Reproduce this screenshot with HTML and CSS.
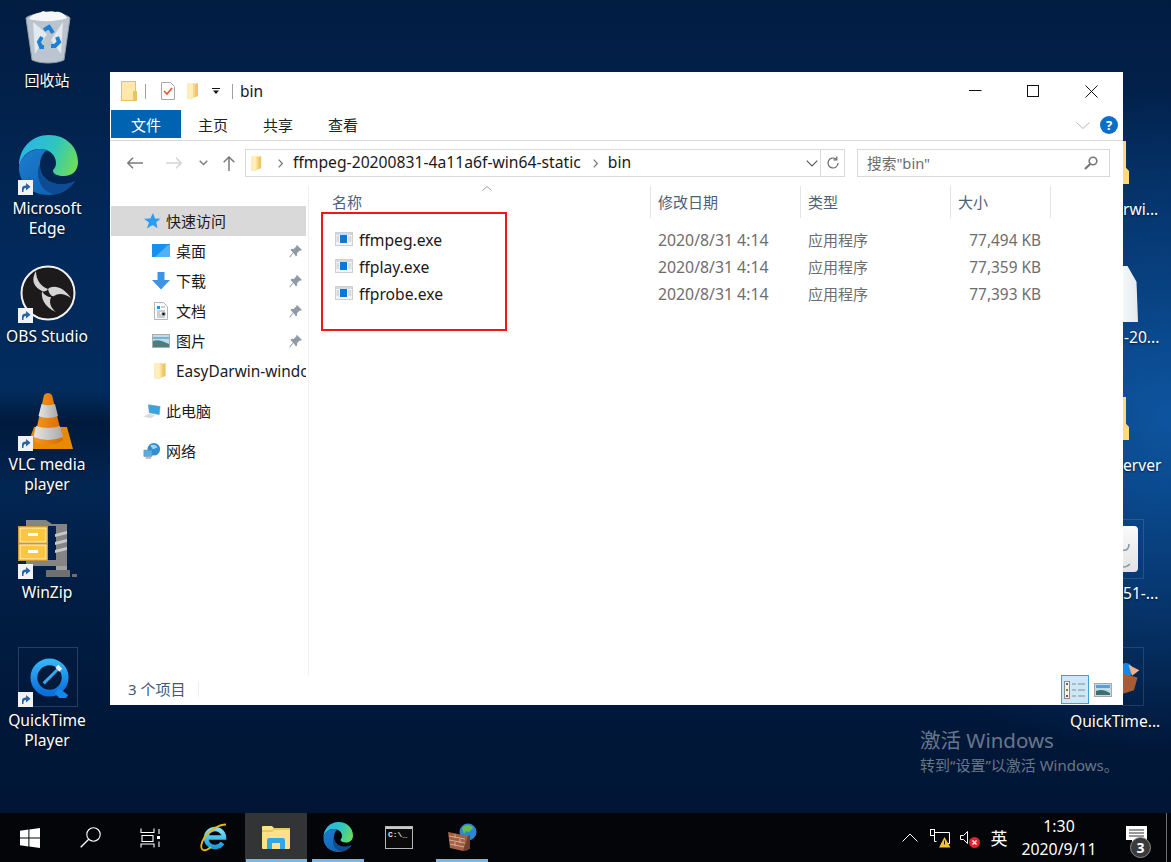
FILE: index.html
```html
<!DOCTYPE html>
<html lang="zh-CN">
<head>
<meta charset="utf-8">
<title>bin</title>
<link rel="stylesheet" href="styles.css">
</head>
<body>
<svg class="defs" width="0" height="0" aria-hidden="true">
  <defs>
    <linearGradient id="edgeTop" x1="0" y1="0.3" x2="1" y2="0.6"><stop offset="0" stop-color="#2bb4e8"/><stop offset=".55" stop-color="#2fc6c0"/><stop offset="1" stop-color="#6cdb5c"/></linearGradient>
    <linearGradient id="edgeLow" x1="0" y1="0" x2="1" y2="1"><stop offset="0" stop-color="#1b7fd0"/><stop offset="1" stop-color="#0f5aa8"/></linearGradient>
    <linearGradient id="qtBlue" x1="0" y1="0" x2="0" y2="1"><stop offset="0" stop-color="#35b2f5"/><stop offset="1" stop-color="#0a6fdc"/></linearGradient>
    <linearGradient id="coneFill" x1="0" y1="0" x2="1" y2="0"><stop offset="0" stop-color="#f59a1c"/><stop offset="1" stop-color="#d96a00"/></linearGradient>
    <linearGradient id="coneWhite" x1="0" y1="0" x2="1" y2="0"><stop offset="0" stop-color="#e6e6e6"/><stop offset="1" stop-color="#a9a9a9"/></linearGradient>
    <linearGradient id="ieBlue" x1="0" y1="0" x2="0" y2="1"><stop offset="0" stop-color="#7fe3fb"/><stop offset="1" stop-color="#1a9be0"/></linearGradient>
    <symbol id="shortcut" viewBox="0 0 15 15"><rect width="15" height="15" fill="#f2f2f2"/><path d="M4 12V8.500C4 6.500 5.500 5.500 8 5.500V3l4.500 3.800L8 10.500V8C6.500 8 5.500 8.500 5.500 12Z" fill="#2a62a8"/></symbol>
    <symbol id="tinyfolder" viewBox="0 0 13 18"><path d="M0 1h7l1 1 3-1v13l-7 3-4-.5Z" fill="#f8d97f"/><path d="M0 1h6v15l-2 1-4-.5Z" fill="#fdeebb"/><path d="M8 2l3-1v13l-3 1Z" fill="#efc768"/></symbol>
    <symbol id="pin" viewBox="0 0 13 13"><path d="M8 0l5 5-1.500.8-.8-.3-2.700 2.700.2 2-1.200 1.200L4.500 8 1 12.500l-.8-.6L4 7.500 1.500 5l1.200-1.200 2 .2L7.500 1.300 7.200.6Z" fill="#8e9aa6"/></symbol>
    <symbol id="exe" viewBox="0 0 18 14"><rect x=".5" y=".5" width="17" height="13" fill="#f4f4f4" stroke="#cfcfcf"/><rect x="1" y="1" width="16" height="2" fill="#d5d9de"/><rect x="5" y="3" width="7" height="8" fill="#0a78d7"/><rect x="1.500" y="4" width="2.500" height="6" fill="#d6dade"/><path d="M13 5h3.500M13 7h3.500M13 9h3.500" stroke="#c2c7cc"/></symbol>
    <symbol id="edge" viewBox="0 0 60 60">
      <path d="M1 31C1 13 14 0 31 0c17 0 29 12 29 27 0 9-6 14-14 14-6 0-11-2-11-5 0-2 3-3 3-8 0-8-7-14-16-14C12 14 4 20 1 31Z" fill="url(#edgeTop)"/>
      <path d="M1 31c-1 16 12 29 29 29 12 0 21-5 27-14-6 3-12 4-18 3-11-2-18-10-17-20 .5-7 3-11 7-14-1 0-2-1-7-1C12 14 3 22 1 31Z" fill="url(#edgeLow)"/>
      <path d="M22 29c-1 10 6 18 17 20 6 1 12 0 18-3-5 8-13 12-21 13-6-1-13-6-15-14-2-6-1-12 1-16Z" fill="#0d4c94"/>
    </symbol>
  </defs>
</svg>

<main class="desktop">
  <div class="desk-item item-recycle">
    <svg class="icon-recycle" viewBox="0 0 46 54">
      <path d="M1 8c6-6 38-7 44 0l-6 42c-8 4-24 4-32 0Z" fill="#cfd7de" fill-opacity=".9" stroke="#8f9aa4"/>
      <path d="M4 9C8 2 14 4 18 1c4 2 8-1 12 1 5-1 10 2 12 6-10 4-28 4-38 1Z" fill="#f4f6f8"/>
      <path d="M8 12l14 12-12 20ZM38 12L26 30l10 14Z" fill="#eef1f4" fill-opacity=".8"/>
      <g fill="none" stroke="#1d7fd6" stroke-width="4">
        <path d="M19 20l5-3 4 6"/><path d="M32 27l2 5-4 4h-4"/><path d="M19 37h-3l-2-5 3-5"/>
      </g>
    </svg>
    <span class="desk-label label-cjk">回收站</span>
  </div>

  <div class="desk-item item-edge">
    <svg class="icon-60"><use href="#edge"/></svg>
    <svg class="shortcut"><use href="#shortcut"/></svg>
    <span class="desk-label">Microsoft<br>Edge</span>
  </div>

  <div class="desk-item item-obs">
    <svg class="icon-obs" viewBox="0 0 56 56">
      <circle cx="28" cy="28" r="26.500" fill="#1d1a1b" stroke="#f2f2f2" stroke-width="2"/>
      <g fill="#d4d4d4">
        <path d="M16 6C11 14 13 22 22 26c2 1 5 0 6-2C22 22 16 16 16 6Z"/>
        <path d="M28 24c5-5 16-2 23 9-7-5-13-5-17-2-2 1-5-2-6-7Z"/>
        <path d="M22 26c-1 7 2 16 14 21-6-5-7-10-5-15-3 0-7-2-9-6Z"/>
      </g>
    </svg>
    <svg class="shortcut"><use href="#shortcut"/></svg>
    <span class="desk-label">OBS Studio</span>
  </div>

  <div class="desk-item item-vlc">
    <svg class="icon-vlc" viewBox="0 0 48 58">
      <path d="M9 35L1 57h47l-6-22Z" fill="#e88a00"/>
      <path d="M19 3q4-4 8 0l11 45c-5 6-25 6-29 0Z" fill="url(#coneFill)"/>
      <path d="M16.500 12q6.500 2.500 13.500 0l3 12q-10 4-19.500 0Z" fill="url(#coneWhite)"/>
      <path d="M11 34q12 4 24 0l3 11q-15 6-29.500 0Z" fill="url(#coneWhite)"/>
    </svg>
    <svg class="shortcut"><use href="#shortcut"/></svg>
    <span class="desk-label">VLC media<br>player</span>
  </div>

  <div class="desk-item item-winzip">
    <svg class="icon-60 icon-zip" viewBox="0 0 60 58">
      <path d="M8 0h20l6 4h15v42H40v4h-2V6H8Z" fill="#848484"/>
      <path d="M8 40h41v6H8Z" fill="#848484"/>
      <path d="M38 46h11v6h-11Z" fill="#a0a0a0"/>
      <path d="M28 50h24v7H28ZM54 54h5v3h-5Z" fill="#6f6f6f"/>
      <path d="M37 14l12-3v3l-12 3ZM37 22l12-3v3l-12 3ZM37 30l12-3v3l-12 3Z" fill="#c8c8c8"/>
      <rect x="0" y="6" width="30" height="35" fill="#c99a2e"/>
      <rect x="2" y="8" width="26" height="14" fill="#fdc63f" stroke="#fff3c8"/>
      <rect x="2" y="25" width="26" height="14" fill="#fdc63f" stroke="#fff3c8"/>
      <rect x="10" y="13" width="10" height="3" fill="#fff"/><rect x="10" y="30" width="10" height="3" fill="#fff"/>
    </svg>
    <svg class="shortcut"><use href="#shortcut"/></svg>
    <span class="desk-label">WinZip</span>
  </div>

  <div class="desk-item item-qt">
    <div class="qt-frame">
      <svg class="icon-qt" viewBox="0 0 42 42">
        <circle cx="20" cy="20" r="16" fill="#041a3a" stroke="url(#qtBlue)" stroke-width="7"/>
        <path d="M30 31l9 7-2 3H30l-5-5Z" fill="#1488e8"/>
        <path d="M14 26l14-14" stroke="#3fa6ee" stroke-width="3"/>
        <path d="M26 10l3-3 4 4-3 3Z" fill="#e8f4ff"/>
      </svg>
    </div>
    <svg class="shortcut"><use href="#shortcut"/></svg>
    <span class="desk-label">QuickTime<br>Player</span>
  </div>

  <div class="peek peek-folder-a"></div>
  <div class="peek peek-file"></div>
  <div class="peek peek-folder-b"></div>
  <div class="peek peek-frame-a">
    <svg class="peek-sheet" viewBox="0 0 15 46"><path d="M0 24c4 1 6-2 6-6M0 41c3 0 5-1 7-3" fill="none" stroke="#8b99a8" stroke-width="1.600"/></svg>
  </div>
  <div class="peek peek-frame-b">
    <svg class="peek-box" viewBox="0 0 22 36"><circle cx="3" cy="10" r="8" fill="#1488e8"/><path d="M0 14l16 4-4 14-12 4Z" fill="#a95c34"/><path d="M6 4l12 6-8 6Z" fill="#f2b08a"/></svg>
  </div>
  <span class="peek-label label-a">rwi...</span>
  <span class="peek-label label-b">-20...</span>
  <span class="peek-label label-c">erver</span>
  <span class="peek-label label-d">51-...</span>
  <span class="peek-label label-e">QuickTime...</span>

  <div class="activate">
    <div class="activate-title">激活 Windows</div>
    <div class="activate-note">转到“设置”以激活 Windows。</div>
  </div>

  <section class="window">
    <header class="titlebar">
      <svg class="qat-folder" viewBox="0 0 16 20"><rect x=".5" y=".5" width="14" height="19" fill="#fdeaa8" stroke="#e6c25c"/><rect x="12" y="10" width="4" height="10" fill="#e8c566"/></svg>
      <i class="qat-sep"></i>
      <svg class="qat-doc" viewBox="0 0 14 18"><path d="M.5.500h9l4 4v13H.5Z" fill="#fff" stroke="#a8a8a8"/><path d="M3 9l3 3 5-6" fill="none" stroke="#e8562a" stroke-width="1.600"/></svg>
      <svg class="qat-fold"><use href="#tinyfolder"/></svg>
      <svg class="qat-drop" viewBox="0 0 8 6"><rect width="8" height="1" fill="#111"/><path d="M1 2.500h6L4 6Z" fill="#111"/></svg>
      <i class="qat-sep qat-sep-b"></i>
      <span class="win-title">bin</span>
      <div class="win-buttons">
        <svg class="win-btn win-min" viewBox="0 0 13 13"><path d="M0 5.500h12.500" stroke="#111"/></svg>
        <svg class="win-btn" viewBox="0 0 13 13"><rect x=".5" y=".5" width="11" height="11" fill="none" stroke="#111"/></svg>
        <svg class="win-btn" viewBox="0 0 13 13"><path d="M.5.500l12 12M12.500.500l-12 12" stroke="#111"/></svg>
      </div>
    </header>

    <nav class="tabs">
      <span class="tab tab-file">文件</span>
      <span class="tab tab-a">主页</span>
      <span class="tab tab-b">共享</span>
      <span class="tab tab-c">查看</span>
      <svg class="ribbon-caret" viewBox="0 0 14 7"><path d="M.5.500L7 6.500 13.500.500" fill="none" stroke="#b5b5b5"/></svg>
      <span class="help">?</span>
    </nav>

    <div class="navbar">
      <span class="nav-slot slot-back"><svg width="16" height="12" viewBox="0 0 16 12"><path d="M16 6H1M6 .700L.800 6 6 11.300" fill="none" stroke="#7a7a7a" stroke-width="1.500"/></svg></span>
      <span class="nav-slot slot-fwd"><svg width="16" height="12" viewBox="0 0 16 12"><path d="M0 6h15M10 .700L15.200 6 10 11.300" fill="none" stroke="#d4d4d4" stroke-width="1.500"/></svg></span>
      <span class="nav-slot slot-down"><svg width="9" height="6" viewBox="0 0 9 6"><path d="M.7.700l3.800 3.800L8.300.7" fill="none" stroke="#808080" stroke-width="1.500"/></svg></span>
      <span class="nav-slot slot-up"><svg width="12" height="15" viewBox="0 0 12 15"><path d="M6 15V1M.7 6.300L6 1l5.300 5.300" fill="none" stroke="#7a7a7a" stroke-width="1.500"/></svg></span>
      <div class="address">
        <svg class="addr-folder"><use href="#tinyfolder"/></svg>
        <svg class="crumb-sep" viewBox="0 0 5 9"><path d="M.7.700l3.600 3.800L.7 8.300" fill="none" stroke="#777" stroke-width="1.200"/></svg>
        <span class="crumb">ffmpeg-20200831-4a11a6f-win64-static</span>
        <svg class="crumb-sep" viewBox="0 0 5 9"><path d="M.7.700l3.600 3.800L.7 8.300" fill="none" stroke="#777" stroke-width="1.200"/></svg>
        <span class="crumb">bin</span>
        <svg class="addr-drop" viewBox="0 0 12 7"><path d="M.7.700L6 6l5.300-5.300" fill="none" stroke="#555" stroke-width="1.100"/></svg>
        <span class="addr-refresh"><svg width="14" height="14" viewBox="0 0 14 14"><path d="M12 7a5 5 0 1 1-2-4" fill="none" stroke="#666" stroke-width="1.200"/><path d="M10.800.500v3.300H7.500" fill="none" stroke="#666" stroke-width="1.200"/></svg></span>
      </div>
      <div class="searchbox">
        <span class="search-hint">搜索"bin"</span>
        <svg class="search-glass" viewBox="0 0 14 14"><circle cx="9" cy="5" r="3.800" fill="none" stroke="#777" stroke-width="1.600"/><path d="M6.200 8L1 13" stroke="#777" stroke-width="2.200"/></svg>
      </div>
    </div>

    <div class="body">
      <aside class="sidebar">
        <div class="side-row side-top selected">
          <svg class="side-icon" viewBox="0 0 18 18"><path d="M10 1l2 5.500 5.500.3-4.300 3.500 1.400 6L9.500 13 4 16.500l2-6L1 6.800l6.300-.3Z" fill="#2b9cf2"/></svg>
          <span>快速访问</span>
        </div>
        <div class="side-row side-sub">
          <svg class="side-icon" viewBox="0 0 18 14"><rect width="18" height="13" fill="#1592f0"/><path d="M3 13L16 1h2v12Z" fill="#4fb2f6"/></svg>
          <span>桌面</span><svg class="pin"><use href="#pin"/></svg>
        </div>
        <div class="side-row side-sub">
          <svg class="side-icon" viewBox="0 0 18 18"><path d="M5.500 0h7v8H18l-9 9.500L0 8h5.500Z" fill="#3f93e2"/></svg>
          <span>下载</span><svg class="pin"><use href="#pin"/></svg>
        </div>
        <div class="side-row side-sub">
          <svg class="side-icon" viewBox="0 0 14 18"><path d="M.5.500h9l4 4v13H.5Z" fill="#fbfbfb" stroke="#b5b5b5"/><path d="M3 4h3v3H3Z" fill="#2b8fe0"/><path d="M7 5h4M3 9h8M3 11h3M8 10.500h3v3H8ZM3 13h4M3 15h8" stroke="#93a3b0"/></svg>
          <span>文档</span><svg class="pin"><use href="#pin"/></svg>
        </div>
        <div class="side-row side-sub">
          <svg class="side-icon" viewBox="0 0 18 14"><rect x=".5" y=".5" width="17" height="13" fill="#bcdcee" stroke="#adadad"/><path d="M1 7c5-2 9 0 16 3v3H1Z" fill="#4d7f7a"/><path d="M1 3h16v2H1Z" fill="#79b2d8"/></svg>
          <span>图片</span><svg class="pin"><use href="#pin"/></svg>
        </div>
        <div class="side-row side-sub">
          <svg class="side-icon side-folder"><use href="#tinyfolder"/></svg>
          <span class="side-latin">EasyDarwin-windows</span>
        </div>
        <div class="side-row side-top side-gap">
          <svg class="side-icon" viewBox="0 0 20 16"><path d="M6 1l13 2-1 9-11-2Z" fill="#36a5e6" stroke="#7a8a96" stroke-width=".6"/><path d="M0 14l7-3 7 2-6 3Z" fill="#d9dcdf"/></svg>
          <span>此电脑</span>
        </div>
        <div class="side-row side-top side-gap">
          <svg class="side-icon" viewBox="0 0 20 18"><circle cx="12" cy="7" r="7" fill="#2f8fd3"/><path d="M8 3c3-2 7-1 8 2l-5 2Z" fill="#9ed2ef"/><rect x="1" y="8" width="9" height="7" fill="#54b0e4" stroke="#6e7f8c" stroke-width=".6"/><path d="M3 16h6v1.500H3Z" fill="#9aa3ab"/></svg>
          <span>网络</span>
        </div>
      </aside>

      <div class="files">
        <svg class="sort-caret" viewBox="0 0 10 5"><path d="M.5 4.500L5 .500l4.500 4" fill="none" stroke="#9a9a9a"/></svg>
        <div class="file-grid file-head">
          <span class="col-name">名称</span>
          <span class="col-cell">修改日期</span>
          <span class="col-cell">类型</span>
          <span class="col-cell col-last">大小</span>
        </div>
        <div class="file-grid file-row">
          <span class="file-name"><svg class="exe"><use href="#exe"/></svg>ffmpeg.exe</span>
          <span class="file-meta file-date">2020/8/31 4:14</span>
          <span class="file-meta">应用程序</span>
          <span class="file-meta file-size">77,494 KB</span>
        </div>
        <div class="file-grid file-row">
          <span class="file-name"><svg class="exe"><use href="#exe"/></svg>ffplay.exe</span>
          <span class="file-meta file-date">2020/8/31 4:14</span>
          <span class="file-meta">应用程序</span>
          <span class="file-meta file-size">77,359 KB</span>
        </div>
        <div class="file-grid file-row">
          <span class="file-name"><svg class="exe"><use href="#exe"/></svg>ffprobe.exe</span>
          <span class="file-meta file-date">2020/8/31 4:14</span>
          <span class="file-meta">应用程序</span>
          <span class="file-meta file-size">77,393 KB</span>
        </div>
        <div class="callout"></div>
      </div>
    </div>

    <footer class="status">
      <span class="status-count">3 个项目</span>
      <span class="view-btn view-on"><svg width="22" height="18" viewBox="0 0 22 18"><g fill="#f2f2f2" stroke="#8c8c8c"><rect x=".5" y=".5" width="5" height="17"/></g><rect x="2" y="2" width="2" height="2" fill="#666"/><rect x="2" y="8" width="2" height="2" fill="#8a7a2a"/><rect x="2" y="14" width="2" height="2" fill="#b0392a"/><path d="M8 3h4M14 3h7M8 9h4M14 9h7M8 15h4M14 15h7" stroke="#8a8a8a"/></svg></span>
      <span class="view-btn view-large"><svg width="18" height="14" viewBox="0 0 18 14"><rect x=".5" y=".5" width="17" height="13" fill="#bcdcee" stroke="#a8a8a8"/><path d="M2 2h14v3H2Z" fill="#5f9ed0"/><path d="M2 8c5-2 9-1 14 2v2H2Z" fill="#3f6f6c"/></svg></span>
    </footer>
  </section>
</main>

<footer class="taskbar">
  <span class="sys-btn"><svg width="20" height="20" viewBox="0 0 20 20"><path d="M0 2.800l8.400-1.200V9.500H0ZM9.400 1.400L20 0v9.500H9.400ZM0 10.500h8.400v7.900L0 17.200ZM9.400 10.500H20V20L9.400 18.600Z" fill="#fff"/></svg></span>
  <span class="sys-btn"><svg width="21" height="21" viewBox="0 0 21 21"><circle cx="13.500" cy="7.500" r="6.700" fill="none" stroke="#fff" stroke-width="1.100"/><path d="M8.700 12.300L.7 20.300" stroke="#fff" stroke-width="1.300"/></svg></span>
  <span class="sys-btn"><svg width="21" height="20" viewBox="0 0 21 20"><path d="M1 .500v4h13v-4M2 7.500h11v6H2ZM1 19.500v-3.500h13v3.500M19 1v5M19 13.500V19" fill="none" stroke="#fff" stroke-width="1.100"/><rect x="17" y="8" width="3" height="3" fill="#fff"/></svg></span>
  <span class="sys-gap"></span>
  <span class="task">
    <svg width="29" height="29" viewBox="0 0 29 29"><path d="M7 14.500h17a9 9 0 1 0-1.500 5.500" fill="none" stroke="url(#ieBlue)" stroke-width="4.500"/><path d="M26 1.500c-6 0-16 5-21 12-4 6-5 12-2 13.500 2 .8 5-.5 8-3" fill="none" stroke="#e8b60c" stroke-width="1.800"/></svg>
  </span>
  <span class="task task-active task-on">
    <svg width="28" height="23" viewBox="0 0 28 23"><path d="M1 0h9l2 2h15a1 1 0 0 1 1 1v19a1 1 0 0 1-1 1H1a1 1 0 0 1-1-1V1a1 1 0 0 1 1-1Z" fill="#fce28a"/><path d="M0 4h10l2-2h16v2H12l-2 2H0Z" fill="#e8c867"/><path d="M5 23v-9a2 2 0 0 1 2-2h14a2 2 0 0 1 2 2v9h-5v-6h-8v6Z" fill="#33a6e4"/></svg>
  </span>
  <span class="task task-on"><svg width="30" height="30"><use href="#edge"/></svg></span>
  <span class="task task-cmd">
    <svg width="28" height="23" viewBox="0 0 28 23"><rect x=".5" y=".5" width="27" height="22" fill="#0a0a0a" stroke="#b5b5b5"/><rect x="1" y="1" width="26" height="2" fill="#c9c9c9"/><text x="3" y="11" class="cmd-text">C:\_</text></svg>
  </span>
  <span class="task task-on">
    <svg width="29" height="28" viewBox="0 0 29 28"><circle cx="20" cy="9" r="8.500" fill="#2f84d6"/><path d="M14 5c3-4 9-4 11 0l-4 4-3-1-2 3Z" fill="#64c04a"/><path d="M0 9l20 4v14l-5 1L2 25Z" fill="#a55f45"/><path d="M1 13l16 3M1 17l16 3M2 21l14 3M7 11v4M12 16v4M7 19v4" stroke="#d9bfa9" stroke-width=".8"/><path d="M20 13l2-1v14l-7 2Z" fill="#6d3f2e"/></svg>
  </span>

  <div class="tray">
    <span class="tray-slot slot-chev"><svg width="16" height="9" viewBox="0 0 16 9"><path d="M.5 8.500L8 1l7.500 7.500" fill="none" stroke="#fff"/></svg></span>
    <span class="tray-slot slot-net"><svg width="21" height="19" viewBox="0 0 21 19"><path d="M4.500 3.500h15v11h-8M4.500 3.500v9h2" fill="none" stroke="#fff"/><rect x=".5" y=".5" width="4" height="6" fill="#000" stroke="#fff"/><path d="M14.500 8l6 10.500H9Z" fill="#fbc02d"/><path d="M14.500 11.500v4" stroke="#222"/></svg></span>
    <span class="tray-slot slot-snd"><svg width="20" height="18" viewBox="0 0 20 18"><path d="M.5 5.500h3l4-4v12l-4-4h-3Z" fill="none" stroke="#fff"/><circle cx="14.500" cy="12.500" r="5.500" fill="#e0242f"/><path d="M12.500 10.500l4 4M16.500 10.500l-4 4" stroke="#fff" stroke-width="1.300"/></svg></span>
    <span class="tray-slot slot-ime">英</span>
    <span class="clock"><span>1:30</span><span>2020/9/11</span></span>
    <span class="tray-slot slot-note">
      <svg width="21" height="17" viewBox="0 0 21 17"><path d="M0 0h21v14H9l-3 3v-3H0Z" fill="#fff"/><path d="M3 4h15M3 7h15M3 10h15" stroke="#333"/></svg>
      <span class="note-badge">3</span>
    </span>
    <i class="tray-edge"></i>
  </div>
</footer>
</body>
</html>
```

FILE: styles.css
```css
* { box-sizing: border-box; }
html, body { margin: 0; padding: 0; }
body {
  width: 1171px;
  height: 862px;
  overflow: hidden;
  background: #000;
  font-family: "Noto Sans", "Noto Sans CJK SC", sans-serif;
  font-size: 15px;
  color: #1a1a1a;
}
svg { display: block; flex: none; }
.defs { position: absolute; }

.desktop {
  position: relative;
  height: 813px;
  overflow: hidden;
  background:
    radial-gradient(ellipse 420px 330px at 1171px 420px, rgba(14, 88, 165, .95) 0%, rgba(10, 72, 140, .7) 45%, rgba(4, 40, 90, 0) 100%),
    linear-gradient(180deg, rgba(1, 20, 50, 0) 48%, rgba(0, 12, 34, .55) 52%, rgba(2, 30, 70, .1) 60%, rgba(0, 20, 50, .6) 100%),
    linear-gradient(180deg, #021c41 0%, #02295a 30%, #022c5e 48%, #011f47 75%, #001739 100%);
}

.desk-item {
  position: absolute;
  left: 0;
  width: 94px;
  color: #fff;
  text-align: center;
}
.desk-label {
  position: absolute;
  left: 0;
  width: 94px;
  font-size: 15.600px;
  line-height: 20px;
  color: #fff;
  text-shadow: 0 1px 2px rgba(0, 0, 0, .8);
}
.desk-item .label-cjk { font-size: 15px; }
.shortcut { position: absolute; left: 18px; width: 15px; height: 15px; }

.item-recycle { top: 10px; height: 90px; }
.item-recycle .desk-label { top: 60px; }
.icon-recycle { position: absolute; left: 25px; top: 0; width: 46px; height: 54px; }

.item-edge { top: 135px; height: 105px; }
.item-edge .desk-label { top: 63px; }
.item-edge .shortcut { top: 45px; }
.icon-60 { position: absolute; left: 18px; top: 0; width: 60px; height: 60px; }

.item-obs { top: 265px; height: 85px; }
.item-obs .desk-label { top: 61px; }
.item-obs .shortcut { top: 43px; }
.icon-obs { position: absolute; left: 20px; top: 0; width: 56px; height: 56px; }

.item-vlc { top: 392px; height: 105px; }
.item-vlc .desk-label { top: 62px; }
.item-vlc .shortcut { top: 44px; }
.icon-vlc { position: absolute; left: 25px; top: 0; width: 48px; height: 58px; }

.item-winzip { top: 520px; height: 85px; }
.item-winzip .desk-label { top: 62px; }
.item-winzip .shortcut { top: 44px; }
.icon-zip { height: 58px; }

.item-qt { top: 647px; height: 105px; }
.item-qt .desk-label { top: 63px; }
.item-qt .shortcut { top: 45px; }
.qt-frame {
  position: absolute;
  left: 18px;
  top: 0;
  width: 60px;
  height: 60px;
  padding: 10px 0 0 11px;
  border: 1px solid rgba(255, 255, 255, .16);
}
.icon-qt { width: 41px; height: 41px; }

.peek { position: absolute; left: 1123px; }
.peek-folder-a { top: 141px; width: 6px; height: 43px; background: #ffd97a; clip-path: polygon(0 0, 50% 0, 50% 62%, 100% 70%, 100% 100%, 0 100%); }
.peek-folder-b { top: 397px; width: 6px; height: 43px; background: #ffd97a; clip-path: polygon(0 0, 50% 0, 50% 62%, 100% 70%, 100% 100%, 0 100%); }
.peek-file { top: 266px; width: 15px; height: 56px; background: linear-gradient(90deg, #f4f7f8, #e3ebee); clip-path: polygon(0 0, 30% 0, 90% 28%, 100% 100%, 0 100%); }
.peek-frame-a, .peek-frame-b {
  width: 21px;
  border: 1px solid rgba(255, 255, 255, .12);
  border-left: 0;
}
.peek-frame-a { top: 519px; height: 60px; padding-top: 6px; }
.peek-sheet {
  width: 15px;
  height: 46px;
  border-radius: 0 4px 4px 0;
  background: linear-gradient(180deg, #fbfbfb, #e2e2e2);
}
.peek-frame-b { top: 647px; height: 59px; padding-top: 13px; }
.peek-box { width: 20px; height: 33px; }
.peek-label {
  position: absolute;
  font-size: 15.600px;
  line-height: 20px;
  color: #fff;
  white-space: nowrap;
  text-shadow: 0 1px 2px rgba(0, 0, 0, .7);
}
.label-a { left: 1123px; top: 199px; }
.label-b { left: 1124px; top: 327px; }
.label-c { left: 1123px; top: 455px; }
.label-d { left: 1123px; top: 583px; }
.label-e { left: 1070px; top: 711px; }

.activate { position: absolute; left: 920px; top: 727px; color: rgba(255, 255, 255, .42); }
.activate-title { font-size: 20.500px; line-height: 27px; }
.activate-note { font-size: 15px; line-height: 22px; white-space: nowrap; }

.window {
  position: absolute;
  left: 110px;
  top: 72px;
  width: 1013px;
  height: 633px;
  display: flex;
  flex-direction: column;
  background: #fff;
}

.titlebar { height: 38px; flex: none; display: flex; align-items: center; padding-left: 11px; }
.qat-folder { width: 16px; height: 20px; }
.qat-sep { width: 1px; height: 15px; background: #a0a0a0; margin-left: 8px; }
.qat-doc { width: 14px; height: 18px; margin-left: 15px; }
.qat-fold { width: 13px; height: 18px; margin-left: 12px; }
.qat-drop { width: 8px; height: 6px; margin-left: 12px; }
.qat-sep-b { margin-left: 12px; }
.win-title { margin-left: 7px; font-size: 15.500px; }
.win-buttons { margin-left: auto; display: flex; padding-right: 25px; gap: 45px; }
.win-btn { width: 13px; height: 13px; }
.win-min { margin-right: 0; }

.tabs { height: 31px; flex: none; display: flex; align-items: flex-start; padding-left: 1px; border-bottom: 1px solid #dadada; }
.tab { height: 28px; line-height: 30px; text-align: center; font-size: 15px; color: #222; }
.tab-file { width: 70px; background: #0063b1; color: #fff; }
.tab-a { width: 64px; }
.tab-b { width: 66px; }
.tab-c { width: 64px; }
.ribbon-caret { width: 14px; height: 7px; margin: 12px 0 0 auto; }
.help {
  width: 18px;
  height: 18px;
  margin: 6px 5px 0 10px;
  border-radius: 50%;
  background: #0a6fc9;
  color: #fff;
  font-size: 13px;
  font-weight: 700;
  line-height: 18px;
  text-align: center;
}

.navbar { height: 28px; flex: none; margin-top: 8px; display: flex; align-items: center; padding-left: 4px; }
.nav-slot { display: flex; justify-content: center; align-items: center; height: 28px; }
.slot-back { width: 42px; }
.slot-fwd { width: 35px; }
.slot-down { width: 25px; }
.slot-up { width: 26px; margin-right: 3px; }
.address {
  width: 600px;
  height: 28px;
  display: flex;
  align-items: center;
  border: 1px solid #d9d9d9;
  padding-left: 5px;
}
.addr-folder { width: 12px; height: 17px; }
.crumb-sep { width: 5px; height: 9px; margin: 0 10px 0 15px; }
.address > .crumb-sep:nth-of-type(3) { margin: 0 10px 0 12px; }
.crumb { font-size: 15.700px; white-space: nowrap; margin-top: -2px; }
.addr-drop { width: 12px; height: 7px; margin-left: auto; }
.addr-refresh {
  width: 24px;
  height: 26px;
  margin-left: 2px;
  display: flex;
  align-items: center;
  justify-content: center;
  border-left: 1px solid #d9d9d9;
}
.searchbox {
  width: 253px;
  height: 28px;
  margin-left: 12px;
  display: flex;
  align-items: center;
  justify-content: space-between;
  padding: 0 11px 0 9px;
  border: 1px solid #d9d9d9;
  color: #6d6d6d;
  font-size: 14.700px;
}
.search-hint { margin-top: -2px; }
.search-glass { width: 14px; height: 14px; }

.body { flex: 1; min-height: 0; display: flex; padding-top: 9px; }

.sidebar {
  width: 199px;
  flex: none;
  padding: 20px 2px 0 1px;
  border-right: 1px solid #f0f0f0;
}
.side-row {
  height: 30px;
  display: flex;
  align-items: center;
  overflow: hidden;
  white-space: nowrap;
  font-size: 15px;
  position: relative;
}
.side-row span { margin-top: -2px; }
.side-top { padding-left: 32px; }
.side-top span { margin-left: 5px; }
.side-sub { padding-left: 41px; }
.side-sub span { margin-left: 6px; }
.side-row .side-latin { font-size: 15.400px; margin-top: 0; }
.side-row.selected { background: #d9d9d9; }
.side-icon { width: 18px; height: 18px; }
.side-folder { padding: 0 2px; }
.pin { position: absolute; left: 178px; top: 9px; width: 13px; height: 13px; }
.side-gap { margin-top: 10px; }

.files { flex: 1; position: relative; min-width: 0; }
.sort-caret { position: absolute; left: 173px; top: 0; width: 10px; height: 5px; }
.file-grid { display: grid; grid-template-columns: 341px 150px 150px 100px; }
.file-head { height: 32px; align-items: stretch; color: #4c607a; font-size: 15px; margin-bottom: 9px; grid-template-columns: 341px 150px 150px 101px; }
.col-name { padding-left: 23px; line-height: 32px; }
.col-cell { padding-left: 7px; line-height: 32px; border-left: 1px solid #e5e5e5; }
.col-last { border-right: 1px solid #e5e5e5; }
.file-row { height: 27px; align-items: center; padding-bottom: 2px; }
.file-name { display: flex; align-items: center; padding-left: 26px; color: #1a1a1a; font-size: 15.700px; }
.exe { width: 18px; height: 14px; margin-right: 6px; margin-top: -2px; }
.file-meta { padding-left: 8px; color: #6d6d6d; font-size: 15px; white-space: nowrap; }
.file-date { font-size: 15.800px; }
.file-size { padding: 2px 9px 0 0; text-align: right; font-size: 15.400px; }
.callout {
  position: absolute;
  left: 12px;
  top: 26px;
  width: 186px;
  height: 119px;
  border: 2px solid #f0190f;
}

.status { height: 30px; flex: none; display: flex; align-items: center; padding-left: 18px; font-size: 15px; color: #3a5a80; }
.status-count { width: 71px; line-height: 16px; margin-top: -2px; border-right: 1px solid #eeeeee; }
.view-btn { display: flex; align-items: center; justify-content: center; margin-bottom: 1px; }
.view-on { width: 28px; height: 29px; margin-left: auto; background: #cce8f7; border: 1px solid #3fa0d8; }
.view-large { width: 18px; margin-left: 5px; margin-right: 11px; }

.taskbar {
  height: 49px;
  display: flex;
  align-items: stretch;
  background: #030508;
  color: #fff;
}
.sys-btn { width: 60px; display: flex; align-items: center; justify-content: center; }
.sys-gap { width: 3px; }
.task { width: 62px; position: relative; display: flex; align-items: center; justify-content: center; padding-bottom: 1px; }
.task-cmd { padding-right: 2px; }
.task-active { background: #333436; }
.task-on::after {
  content: "";
  position: absolute;
  left: 5px;
  right: 5px;
  bottom: 0;
  height: 3px;
  background: #76b9ed;
}
.task-active::after { left: 1px; right: 0; }
.cmd-text { font-family: "Liberation Mono", monospace; font-size: 8px; font-weight: 700; fill: #e6e6e6; }

.tray { margin-left: auto; display: flex; align-items: stretch; }
.tray-slot { display: flex; align-items: center; justify-content: center; position: relative; }
.slot-chev { width: 32px; }
.slot-net { width: 29px; padding-top: 2px; }
.slot-snd { width: 30px; padding-top: 2px; }
.slot-ime { width: 28px; font-size: 17px; }
.clock { width: 92px; display: flex; flex-direction: column; align-items: center; font-size: 15.800px; line-height: 23px; padding-top: 2px; }
.slot-note { width: 61px; }
.slot-note svg { margin: -6px 0 0 1px; }
.note-badge {
  position: absolute;
  left: 25px;
  top: 24px;
  width: 21px;
  height: 21px;
  border-radius: 50%;
  background: #3a3a3a;
  border: 1px solid #8a8a8a;
  font-size: 14px;
  font-weight: 700;
  line-height: 19px;
  text-align: center;
}
.tray-edge { width: 1px; background: #6f6f6f; margin-right: 4px; }
```
